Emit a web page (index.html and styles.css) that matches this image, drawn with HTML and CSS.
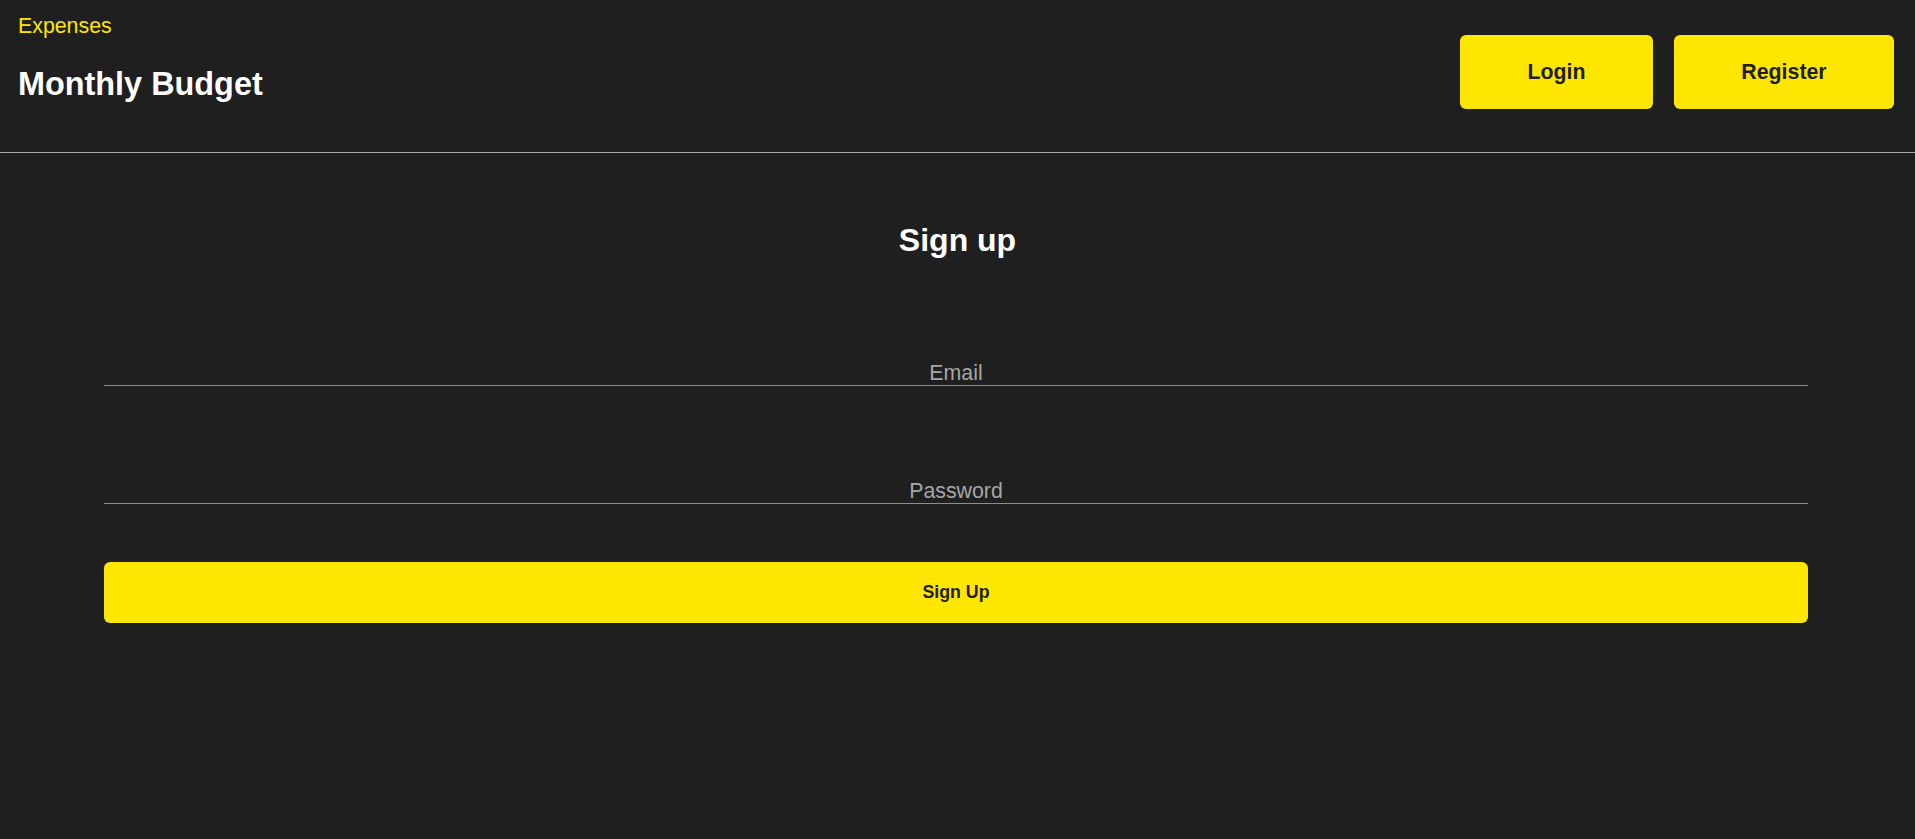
FILE: index.html
```html
<!DOCTYPE html>
<html lang="en">
<head>
<meta charset="utf-8">
<title>Monthly Budget</title>
<link rel="stylesheet" href="styles.css">
</head>
<body>
<header class="header">
  <div class="brand">
    <a class="brand-link" href="#">Expenses</a>
    <h1 class="brand-title">Monthly Budget</h1>
  </div>
  <nav class="nav">
    <button class="nav-btn nav-login" type="button">Login</button>
    <button class="nav-btn nav-register" type="button">Register</button>
  </nav>
</header>
<main class="main">
  <h2 class="page-title">Sign up</h2>
  <form class="form">
    <input class="field field-email" type="email" placeholder="Email">
    <input class="field field-password" type="password" placeholder="Password">
    <button class="submit" type="button">Sign Up</button>
  </form>
</main>
</body>
</html>
```
FILE: styles.css
```css
html, body {
  margin: 0;
  padding: 0;
  background: #1f1f1f;
  font-family: "Liberation Sans", Arial, sans-serif;
}
body {
  min-height: 839px;
}
.header {
  display: flex;
  justify-content: space-between;
  align-items: flex-start;
  height: 152px;
  padding: 0 21px 0 18px;
  border-bottom: 1px solid #ababab;
}
.brand {
  display: flex;
  flex-direction: column;
}
.brand-link {
  margin-top: 14px;
  font-size: 21.33px;
  line-height: 24px;
  color: #ffe600;
  text-decoration: none;
}
.brand-title {
  margin: 26px 0 0;
  font-size: 32.4px;
  line-height: 40px;
  font-weight: 700;
  color: #ffffff;
}
.nav {
  display: flex;
  gap: 21px;
  margin-top: 35px;
}
.nav-btn {
  height: 74px;
  border: none;
  border-radius: 6px;
  background: #ffe600;
  color: #1f1f1f;
  font-family: "Liberation Sans", Arial, sans-serif;
  font-size: 21.33px;
  font-weight: 700;
  padding: 0;
}
.nav-login { width: 193px; }
.nav-register { width: 220px; }
.main {
  padding-top: 69px;
}
.page-title {
  margin: 0;
  text-align: center;
  font-size: 32px;
  line-height: 37px;
  font-weight: 700;
  color: #ffffff;
}
.form {
  display: flex;
  flex-direction: column;
  width: 1704px;
  margin-left: 104px;
  margin-top: 101px;
}
.field {
  display: block;
  box-sizing: content-box;
  width: 100%;
  height: 23px;
  padding: 2px 0 0;
  margin: 0;
  border: none;
  border-bottom: 1px solid #8e8e8e;
  background: transparent;
  color: #ffffff;
  text-align: center;
  font-family: "Liberation Sans", Arial, sans-serif;
  font-size: 21.33px;
  outline: none;
}
.field::placeholder {
  color: #a6a6a6;
  opacity: 1;
}
.field-password {
  margin-top: 92px;
}
.submit {
  margin-top: 58px;
  height: 61px;
  border: none;
  border-radius: 6px;
  background: #ffe600;
  color: #1f1f1f;
  font-family: "Liberation Sans", Arial, sans-serif;
  font-size: 17.8px;
  font-weight: 700;
  padding: 0;
}
```
